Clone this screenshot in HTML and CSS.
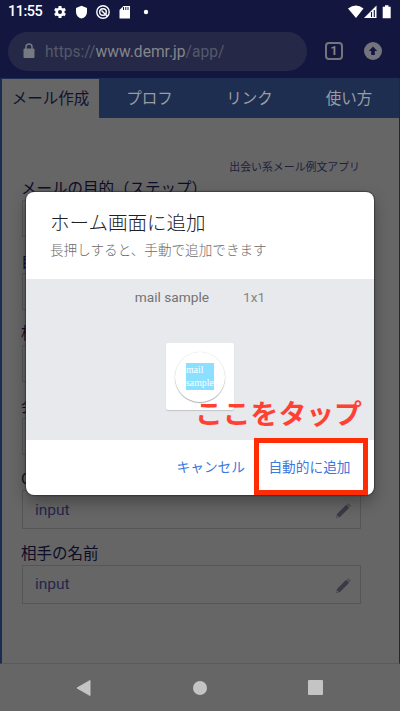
FILE: index.html
```
<!DOCTYPE html>
<html lang="ja">
<head>
<meta charset="utf-8">
<title>メール作成</title>
<link rel="stylesheet" href="styles.css">
</head>
<body>
<div class="phone">
  <header class="status">
    <span class="time">11:55</span>
    <svg class="status-left" width="104" height="16" viewBox="0 0 104 16">
      <g fill="#fff">
        <circle cx="8" cy="8" r="4.6"/>
        <g stroke="#fff" stroke-width="3"><path d="M8 2v12M2.800 5l10.400 6M2.800 11l10.400-6"/></g>
        <circle cx="8" cy="8" r="2" fill="#131740"/>
        <path d="M29.500 1.700l5.500 2.200v4c0 3.300-2.200 5.700-5.500 6.600-3.300-.9-5.500-3.300-5.500-6.600v-4z"/>
        <path d="M71.500 2h6.500v12.500h-10.500V6z"/>
        <circle cx="94" cy="8" r="2.200"/>
      </g>
      <g fill="none" stroke="#fff" stroke-width="1.400"><circle cx="51" cy="8" r="6.200"/><circle cx="51" cy="8" r="3.300"/><path d="M49.500 6.500l6 6"/></g>
      <path d="M71.500 3v3M73.800 3v3M76 3v3" stroke="#131740"/>
    </svg>
    <svg class="status-right" width="46" height="16" viewBox="0 0 46 16">
      <path d="M0 4.500Q8-1.500 15.500 4.500L8 14z" fill="#fff"/>
      <path d="M16 14L28.500 1.500V14z" fill="#fff"/><path d="M23.500 8v5M26.300 6v7" stroke="#131740" stroke-width="1.100"/>
      <path d="M37 1.300h3.500v1.500h2.200v11.500h-8V2.800H37z" fill="#fff"/>
    </svg>
  </header>
  <div class="browser">
    <div class="address">
      <svg width="12" height="16" viewBox="0 0 12 16"><rect x=".5" y="5.500" width="11" height="9.500" rx="1" fill="#777980"/><path d="M3 6V4a3 3 0 0 1 6 0v2" fill="none" stroke="#777980" stroke-width="1.500"/></svg>
      <span class="url">https://<b>www.demr.jp</b>/app/</span>
    </div>
    <span class="count">1</span>
    <svg class="update" width="18" height="18" viewBox="0 0 18 18"><circle cx="9" cy="9" r="9" fill="#74757c"/><path d="M9 4.500L13.200 9H10.800v4H7.200V9H4.800z" fill="#131740"/></svg>
  </div>
  <main class="page">
    <nav class="tabs">
      <a class="tab active">メール作成</a><a class="tab">プロフ</a><a class="tab">リンク</a><a class="tab">使い方</a>
    </nav>
    <p class="tagline">出会い系メール例文アプリ</p>
    <form class="form">
      <div class="field"><label>メールの目的（ステップ）</label><div class="box"></div></div>
      <div class="field"><label>自</label><div class="box"></div></div>
      <div class="field"><label>相</label><div class="box"></div></div>
      <div class="field"><label>会</label><div class="box"></div></div>
      <div class="field"><label>O</label><div class="box text">input<svg width="16" height="16" viewBox="0 0 16 16"><path d="M1 15l1-4L11.200 1.800l3 3L5 14z" fill="#393a46"/><path d="M12 1l1.200-.6 2.400 2.400L15 4z" fill="#444551"/><path d="M2 12.500L3.500 14 1.600 14.500z" fill="#77777b"/></svg></div></div>
      <div class="field"><label>相手の名前</label><div class="box text">input<svg width="16" height="16" viewBox="0 0 16 16"><path d="M1 15l1-4L11.200 1.800l3 3L5 14z" fill="#393a46"/><path d="M12 1l1.200-.6 2.400 2.400L15 4z" fill="#444551"/><path d="M2 12.500L3.500 14 1.600 14.500z" fill="#77777b"/></svg></div></div>
    </form>
  </main>
  <footer class="navbar">
    <svg width="16" height="18" viewBox="0 0 16 18"><path d="M1 9L14 1.500v15z" fill="#c4c4c4" stroke="#c4c4c4" stroke-linejoin="round"/></svg>
    <i class="home"></i>
    <i class="recent"></i>
  </footer>

  <section class="dialog">
    <header class="dialog-head">
      <h1>ホーム画面に追加</h1>
      <p>長押しすると、手動で追加できます</p>
    </header>
    <div class="preview">
      <div class="caption"><span>mail sample</span><span class="size">1x1</span></div>
      <div class="tile"><div class="disc"><div class="app">mail<br>sample</div></div></div>
    </div>
    <div class="actions">
      <span class="cancel">キャンセル</span>
      <span class="add">自動的に追加</span>
    </div>
    <div class="hint">ここをタップ</div>
  </section>
</div>
</body>
</html>
```
FILE: styles.css
```
* { box-sizing: border-box; }
body { margin: 0; font-family: Roboto, "Noto Sans CJK JP", sans-serif; }
.phone { position: relative; width: 400px; height: 711px; overflow: hidden; display: flex; flex-direction: column; background: #666; }
.status { height: 24px; flex: none; display: flex; align-items: center; padding: 0 6px 0 8px; background: #131740; color: #fff; }
.time { width: 35px; font-size: 14.500px; font-weight: 500; line-height: 24px; letter-spacing: -0.5px; white-space: nowrap; }
.status-left { margin-left: 9px; }
.status-right { margin-left: auto; }
.browser { height: 54px; flex: none; display: flex; align-items: center; padding: 0 18px 0 8px; background: #131740; }
.address { width: 299px; height: 39px; border-radius: 20px; background: #252947; display: flex; align-items: center; padding-left: 15px; gap: 10px; }
.url { padding-top: 1px; font-size: 15.600px; line-height: 24px; color: #55586a; }
.url b { font-weight: 400; color: #84858b; }
.count { width: 18px; height: 18px; margin-left: 18px; border: 2px solid #74757c; border-radius: 4px; color: #84858b; font-size: 12px; font-weight: 700; line-height: 14px; text-align: center; }
.update { margin-left: auto; }
.page { height: 586px; flex: none; border-left: 2px solid #1c2b50; border-right: 1px solid #1c2450; border-bottom: 1px solid #5b5b5b; }
.tabs { height: 40px; display: grid; grid-template-columns: 97px 101px 99px 100px; background: #1e2e50; }
.tab { padding-top: 1px; color: #9b9ca0; font-size: 15.5px; line-height: 40px; text-align: center; }
.active { background: #666; color: #12122f; margin-top: 1px; line-height: 38px; }
.tagline { margin: 40px 39px 0 0; font-size: 10.900px; line-height: 20px; text-align: right; color: #1d1f3d; }
.form { padding: 0 38px 0 20px; }
.field { height: 72.600px; }
.field label { display: block; height: 22px; margin-left: -1px; font-size: 15.5px; line-height: 22px; color: #0d0d27; white-space: nowrap; }
.box { height: 37px; border: 1px solid #565656; }
.field:nth-child(5) { height: 74.600px; }
.text { height: 39px; display: flex; align-items: center; justify-content: space-between; padding: 0 9px 0 12px; font-size: 15.500px; color: #24264c; }
.text svg { margin-top: 3px; }
.navbar { flex: 1; display: flex; align-items: center; padding: 0 77px 0 76px; justify-content: space-between; background: #666; }
.home { width: 14px; height: 14px; border-radius: 50%; background: #c4c4c4; }
.recent { width: 15px; height: 15px; border-radius: 1px; background: #c4c4c4; }
.dialog { position: absolute; left: 26px; top: 192px; width: 348px; height: 303px; border-radius: 8px; background: #fff; box-shadow: 0 0 1px 1px rgba(35,35,45,.55), 0 7px 16px rgba(0,0,0,.32); }
.dialog-head { height: 87px; padding: 18px 24px 0; }
.dialog-head h1 { margin: 0; font-size: 19.500px; line-height: 28px; font-weight: 300; color: #202124; }
.dialog-head p { margin: 2px 0 0; font-size: 13.600px; font-weight: 300; line-height: 20px; color: #6c6c6c; }
.preview { height: 161px; background: #e8e9ed; display: flex; flex-direction: column; align-items: center; }
.caption { height: 36px; line-height: 36px; font-size: 13.700px; color: #737373; display: flex; gap: 34px; }
.size { color: #858585; }
.tile { width: 68px; height: 67px; margin-top: 28px; border-radius: 2px; background: #fff; box-shadow: 0 1px 1px #c4c4c8; display: flex; align-items: center; justify-content: center; }
.disc { width: 50px; height: 50px; border-radius: 50%; background: #fff; box-shadow: 0 0 1px #ccc, 0 1px 1px #aaa; display: flex; align-items: center; justify-content: center; }
.app { width: 28px; height: 27px; background: #8be0ff; color: #fff; font: 9.800px/13px "Liberation Serif", serif; }
.actions { height: 55px; display: flex; color: #3d78dc; font-size: 13.700px; line-height: 55px; justify-content: flex-end; gap: 9px; padding-right: 6px; }
.add { width: 114px; height: 57px; margin-top: -2px; border: 5px solid #ff2d05; line-height: 49px; text-align: center; padding-right: 3px; }
.hint { position: absolute; left: 169px; top: 203px; font-size: 27.800px; line-height: 40px; font-weight: 700; color: #ff4134; white-space: nowrap; }
```
